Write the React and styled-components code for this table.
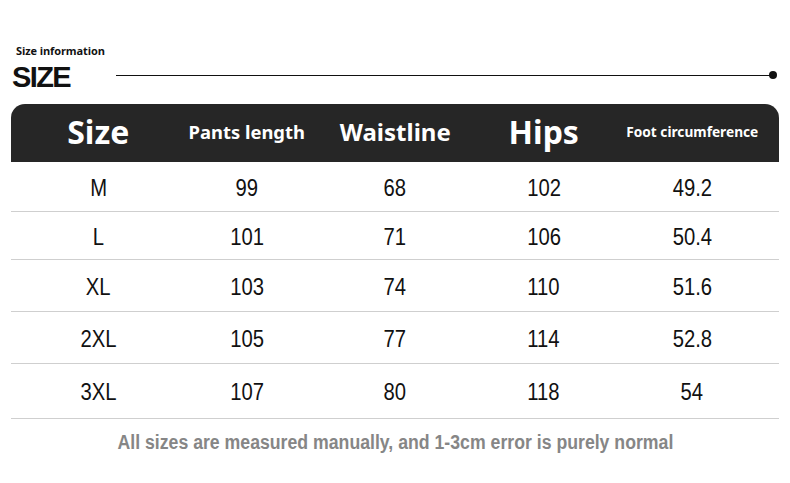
import React from "react";
import styled, { createGlobalStyle } from "styled-components";

const Global = createGlobalStyle`
  html, body { margin: 0; padding: 0; background: #fff; }
  body { width: 790px; height: 483px; overflow: hidden; }
`;

const Page = styled.div`
  width: 790px;
  height: 483px;
  box-sizing: border-box;
  padding: 44px 11px 0 11px;
  display: flex;
  flex-direction: column;
  font-family: "Noto Sans", "Open Sans", sans-serif;
  color: #111;
`;

const Caption = styled.div`
  font-family: "Open Sans", "Noto Sans", sans-serif;
  font-weight: 700;
  font-size: 11px;
  line-height: 14px;
  padding-left: 5px;
  letter-spacing: -0.1px;
`;

const TitleRow = styled.div`
  display: flex;
  align-items: center;
  height: 34px;
  margin-top: 2px;
`;

const Title = styled.div`
  font-family: "Liberation Sans", Arial, sans-serif;
  font-weight: 700;
  font-size: 29px;
  letter-spacing: -1.6px;
  line-height: 34px;
  width: 104px;
  padding-left: 1px;
`;

const Rule = styled.div`
  flex: 1;
  height: 1.5px;
  background: #111;
  position: relative;
  margin-right: 6px;
  margin-top: -3px;
  &::after {
    content: "";
    position: absolute;
    right: -4px;
    top: -3.5px;
    width: 8px;
    height: 8px;
    border-radius: 50%;
    background: #111;
  }
`;

const Table = styled.div`
  margin-top: 10px;
  display: flex;
  flex-direction: column;
`;

const Head = styled.div`
  display: grid;
  grid-template-columns: repeat(5, 148.5px);
  padding: 0 13px;
  height: 58px;
  align-items: center;
  background: #262626;
  border-radius: 14px 14px 0 0;
  color: #fff;
`;

const HeadCell = styled.div`
  text-align: center;
  font-weight: 700;
  font-size: ${(p) => p.$size}px;
  line-height: 1;
  white-space: nowrap;
  margin-top: -2px;
`;

const Row = styled.div`
  display: grid;
  grid-template-columns: repeat(5, 148.5px);
  padding: 0 13px;
  height: ${(p) => p.$h}px;
  align-items: center;
  border-bottom: 1px solid #cfcfcf;
  box-sizing: border-box;
`;

const Cell = styled.div`
  text-align: center;
  line-height: 1;
  margin-top: 3px;
`;

const CellText = styled.span`
  display: inline-block;
  font-family: "Liberation Sans", Arial, sans-serif;
  font-size: 23px;
  color: #111;
  transform: scaleX(0.88);
`;

const Note = styled.div`
  margin-top: 12px;
  text-align: center;
`;

const NoteText = styled.span`
  display: inline-block;
  font-family: "Liberation Sans", Arial, sans-serif;
  font-weight: 700;
  font-size: 20px;
  color: #868686;
  transform: scaleX(0.884);
  white-space: nowrap;
`;

const headers = [
  { t: "Size", s: 32 },
  { t: "Pants length", s: 18.4 },
  { t: "Waistline", s: 24 },
  { t: "Hips", s: 32 },
  { t: "Foot circumference", s: 13.7 },
];

const rows = [
  ["M", "99", "68", "102", "49.2"],
  ["L", "101", "71", "106", "50.4"],
  ["XL", "103", "74", "110", "51.6"],
  ["2XL", "105", "77", "114", "52.8"],
  ["3XL", "107", "80", "118", "54"],
];
const heights = [50, 48, 52, 52, 55];

export default function App() {
  return (
    <>
      <Global />
      <Page>
        <Caption>Size information</Caption>
        <TitleRow>
          <Title>SIZE</Title>
          <Rule />
        </TitleRow>
        <Table>
          <Head>
            {headers.map((h) => (
              <HeadCell key={h.t} $size={h.s}>
                {h.t}
              </HeadCell>
            ))}
          </Head>
          {rows.map((r, i) => (
            <Row key={r[0]} $h={heights[i]}>
              {r.map((c, j) => (
                <Cell key={j}>
                  <CellText>{c}</CellText>
                </Cell>
              ))}
            </Row>
          ))}
        </Table>
        <Note>
          <NoteText>All sizes are measured manually, and 1-3cm error is purely normal</NoteText>
        </Note>
      </Page>
    </>
  );
}
